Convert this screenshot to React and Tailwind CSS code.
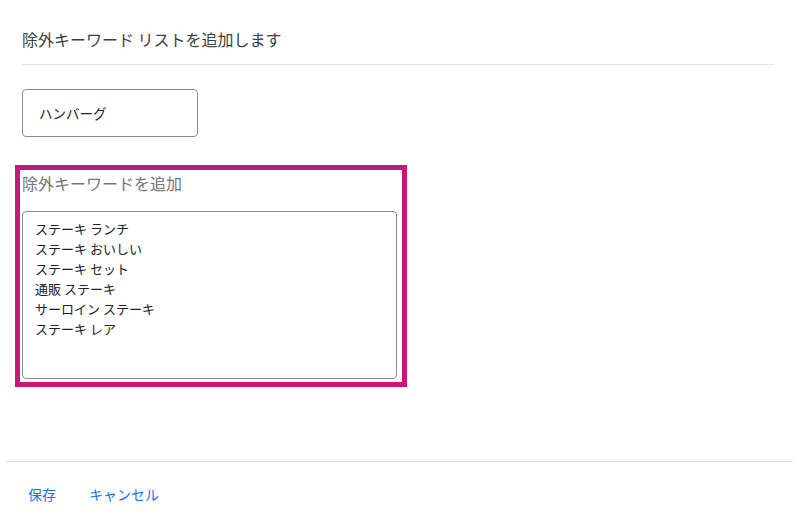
import React from "react";

const keywords = [
  "ステーキ ランチ",
  "ステーキ おいしい",
  "ステーキ セット",
  "通販 ステーキ",
  "サーロイン ステーキ",
  "ステーキ レア",
];

const App = () => {
  return (
    <div
      className="w-[799px] h-[516px] bg-white flex flex-col"
      style={{ fontFamily: '"Noto Sans CJK JP", "Noto Sans", sans-serif' }}
    >
      {/* Header */}
      <div className="pl-[22px] pr-[25px] pt-[27px]">
        <h1 className="text-[16px] leading-[24px] text-[#3c4043] font-normal">
          除外キーワード リストを追加します
        </h1>
        <div className="mt-[13px] border-t border-[#e3e3e3]" />
      </div>

      {/* Single keyword input */}
      <div className="pl-[22px] mt-[24px]">
        <input
          type="text"
          defaultValue="ハンバーグ"
          className="w-[176px] h-[48px] px-[16px] text-[13.5px] text-[#202124] border border-[#8c8c8c] rounded-[4px] outline-none"
        />
      </div>

      {/* Highlighted keyword list */}
      <div className="ml-[15px] mt-[28px] w-[392px] border-[5px] border-[#c8177a] pl-[2px] pr-[5px] pt-[1px] pb-[3px]">
        <p className="text-[16px] leading-[24px] text-[#757575]">除外キーワードを追加</p>
        <textarea
          defaultValue={keywords.join("\n")}
          className="mt-[16px] block w-full h-[168px] resize-none border border-[#8c8c8c] rounded-[4px] pl-[12px] pt-[7px] text-[13px] leading-[20px] text-[#202124] outline-none"
        />
      </div>

      {/* Footer */}
      <div className="mx-[6px] mt-auto mb-[12px] border-t border-[#e0e0e0]">
        <div className="flex items-center gap-[33px] pl-[22px] pt-[22px]">
          <button className="text-[14px] leading-[20px] text-[#1a73e8]">保存</button>
          <button className="text-[14px] leading-[20px] text-[#1a73e8]">キャンセル</button>
        </div>
      </div>
    </div>
  );
};

export default App;
